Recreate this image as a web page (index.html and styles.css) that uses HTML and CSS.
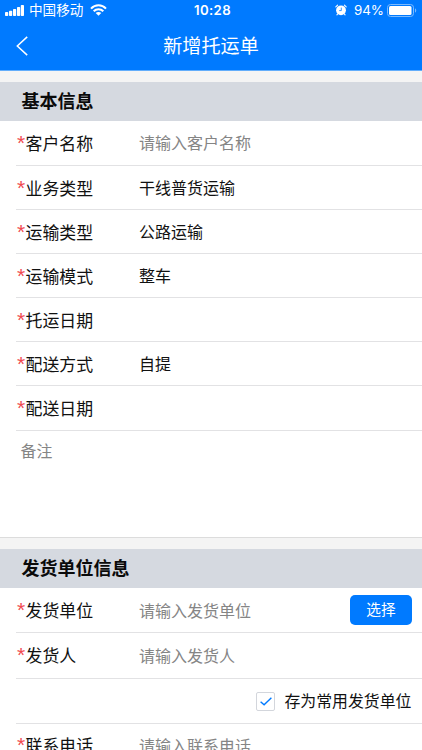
FILE: index.html
```
<!DOCTYPE html>
<html lang="zh-CN">
<head>
<meta charset="utf-8">
<title>新增托运单</title>
<link rel="stylesheet" href="styles.css">
</head>
<body>
<header class="top">
  <div class="status">
    <div class="status-left">
      <svg class="signal" width="19" height="11" viewBox="0 0 19 11" fill="#fff"><rect x="0" y="7" width="3.2" height="4" rx=".8"/><rect x="4" y="5.7" width="3.2" height="5.3" rx=".8"/><rect x="8" y="4" width="3.2" height="7" rx=".8"/><rect x="12" y="2" width="3.2" height="9" rx=".8"/><rect x="15.8" y="0" width="3.2" height="11" rx=".8"/></svg>
      <span class="carrier">中国移动</span>
      <svg class="wifi" width="17" height="12" viewBox="0 0 17 12" fill="none" stroke="#fff" stroke-width="2.1"><path d="M1 4.6C5.2.2 11.8.2 16 4.6M3.7 7.3c2.7-2.7 6.9-2.7 9.6 0"/><path d="M8.5 11.7 5.7 9c1.6-1.5 4-1.5 5.6 0z" fill="#fff" stroke="none"/></svg>
    </div>
    <span class="clock">10:28</span>
    <div class="status-right">
      <svg class="alarm" width="12" height="12" viewBox="0 0 12 12"><circle cx="6" cy="6.3" r="4.9" fill="#fff"/><path d="M.8 2.8 2.6 1.1M11.2 2.8 9.4 1.1M2.6 10l-.7.9M9.4 10l.7.9" stroke="#fff" stroke-width="1.1" stroke-linecap="round"/><path d="M6.3 3.6v3H4.2" fill="none" stroke="#007aff" stroke-width=".8"/></svg>
      <span class="percent">94%</span>
      <svg class="battery" width="30" height="13" viewBox="0 0 30 13"><rect x=".5" y=".5" width="26" height="12" rx="3" fill="none" stroke="#7abaff"/><rect x="2" y="2" width="22.5" height="9" rx="1.5" fill="#fff"/><path d="M28 4.3c1.7.7 1.7 3.7 0 4.4z" fill="#7abaff"/></svg>
    </div>
  </div>
  <div class="nav">
    <svg class="back" width="13" height="20" viewBox="0 0 13 20" fill="none" stroke="#fff" stroke-width="1.5"><path d="M11.2.9 1.3 10l9.9 9.1"/></svg>
    <h1>新增托运单</h1>
  </div>
</header>
<section class="group basic">
  <h2>基本信息</h2>
  <div class="row"><label><i>*</i>客户名称</label><span class="value hint">请输入客户名称</span></div>
  <div class="row"><label><i>*</i>业务类型</label><span class="value">干线普货运输</span></div>
  <div class="row"><label><i>*</i>运输类型</label><span class="value">公路运输</span></div>
  <div class="row"><label><i>*</i>运输模式</label><span class="value">整车</span></div>
  <div class="row"><label><i>*</i>托运日期</label></div>
  <div class="row"><label><i>*</i>配送方式</label><span class="value">自提</span></div>
  <div class="row"><label><i>*</i>配送日期</label></div>
  <div class="remark hint">备注</div>
</section>
<section class="group sender">
  <h2>发货单位信息</h2>
  <div class="row"><label><i>*</i>发货单位</label><span class="value hint">请输入发货单位</span><button class="pick">选择</button></div>
  <div class="row"><label><i>*</i>发货人</label><span class="value hint">请输入发货人</span></div>
  <div class="row save"><span class="check"><svg width="12" height="9" viewBox="0 0 12 9" fill="none" stroke="#007aff" stroke-width="1.4"><path d="m.6 4.7 3.5 3L11.4.8"/></svg></span><span class="save-text">存为常用发货单位</span></div>
  <div class="row"><label><i>*</i>联系电话</label><span class="value hint">请输入联系电话</span></div>
</section>
</body>
</html>
```
FILE: styles.css
```
* { box-sizing: border-box; }
html, body { height: 750px; overflow: hidden; }
body {
  margin: 0;
  background: #f4f4f4;
  color: #111;
  font-family: "Noto Sans CJK SC", sans-serif;
}
h1, h2 { margin: 0; }
svg { display: block; flex: none; }

.top {
  height: 71px;
  background: #007aff;
  border-bottom: 1px solid #62adfb;
  color: #fff;
}
.status {
  display: grid;
  grid-template-columns: 1fr auto 1fr;
  height: 20px;
  padding: 0 5px;
  align-items: center;
  line-height: 20px;
}
.status-left, .status-right { display: flex; height: 20px; align-items: center; }
.status-right { justify-content: flex-end; }
.carrier { margin-left: 5px; padding-bottom: 2px; font-size: 13.6px; }
.wifi { margin-left: 7px; }
.clock {
  padding-left: 3px;
  font: 600 13.2px/20px Inter, sans-serif;
  letter-spacing: .4px;
}
.percent {
  margin: 0 3px 0 7px;
  font: 400 13.4px/20px Inter, sans-serif;
}
.nav {
  display: grid;
  grid-template-columns: 33px 1fr 33px;
  height: 50px;
  align-items: center;
}
.back { margin-left: 16px; margin-top: 2px; }
.nav h1 {
  text-align: center;
  font-size: 19.1px;
  font-weight: 400;
  line-height: 28px;
}

.group {
  margin-top: 11px;
  background: #fff;
}
.group h2 {
  height: 39px;
  padding-left: 21.5px;
  background: #d5d9e0;
  color: #0a0a0a;
  font-size: 18px;
  font-weight: 700;
  line-height: 37px;
}
.basic { border-bottom: 1px solid #dcdcdc; }
.row {
  display: flex;
  height: 44.1px;
  margin-left: 16px;
  border-bottom: 1px solid #e2e2e4;
  align-items: center;
}
.basic .row:nth-child(2) { height: 45px; }
.row label {
  display: flex;
  flex: none;
  width: 123px;
  padding-left: 1px;
  font-size: 16.9px;
  line-height: 24px;
  white-space: nowrap;
}
.basic .row:nth-child(2) label { padding-bottom: 1px; }
.row i {
  width: 8.5px;
  color: #f04a50;
  font: 400 21px/24px "Liberation Sans", sans-serif;
}
.value { padding-bottom: 2px; font-size: 16px; line-height: 24px; }
.hint { color: #858585; }
.remark {
  height: 106.4px;
  padding: 8px 0 0 20.5px;
  font-size: 15.9px;
  line-height: 24px;
}
.sender .row { height: 45.3px; }
.sender .value { padding-bottom: 1px; }
.sender .row label { padding-bottom: 1px; }
.pick {
  width: 62px;
  height: 30px;
  margin: 0 10px 0 auto;
  padding: 0 0 2px;
  border: 0;
  border-radius: 5px;
  background: #007aff;
  color: #fff;
  font: 400 14.7px/28px "Noto Sans CJK SC", sans-serif;
}
.save { padding-right: 10.5px; justify-content: flex-end; }
.check {
  display: flex;
  width: 19px;
  height: 19px;
  margin: 2px 9px 0 0;
  border: 1px solid #d3d6dc;
  border-radius: 2px;
  align-items: center;
  justify-content: center;
}
.save-text { padding-top: 1px; font-size: 15.9px; line-height: 24px; }
```
